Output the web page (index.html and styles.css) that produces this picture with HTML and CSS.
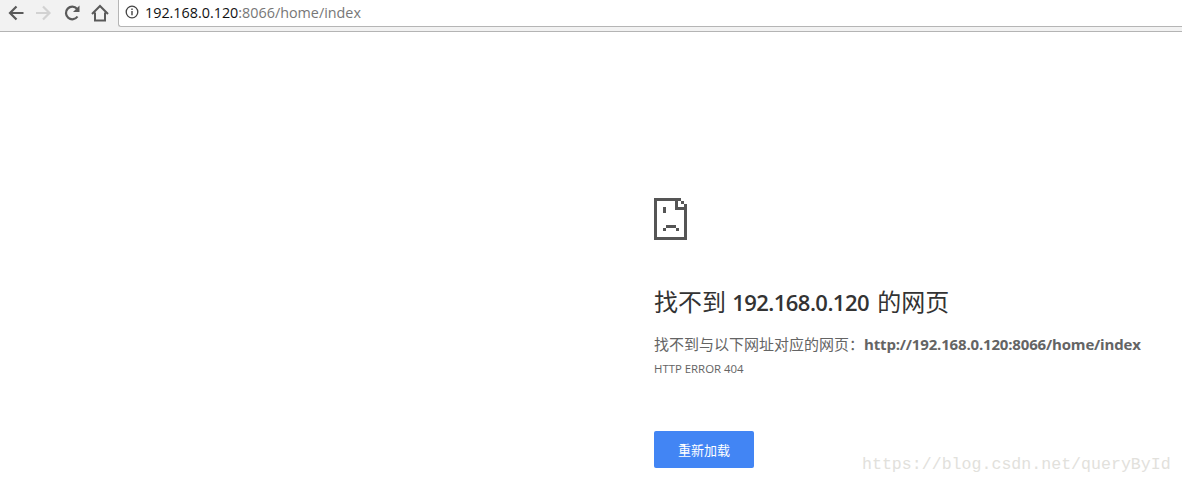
FILE: index.html
```html
<!DOCTYPE html>
<html lang="zh-CN">
<head>
    <meta charset="UTF-8">
    <title>192.168.0.120:8066/home/index</title>
    <link rel="stylesheet" href="styles.css">
</head>
<body>
    <!-- Browser toolbar -->
    <div class="toolbar">
        <svg class="nav-icon" width="22" height="26" viewBox="0 0 22 26"><path d="M18.500 13H6M11.500 6.500 5 13l6.500 6.500" fill="none" stroke="#5a5a5a" stroke-width="2.200"/></svg>
        <svg class="nav-icon" width="22" height="26" viewBox="0 0 22 26"><path d="M3 13h13M10 6.500l6.500 6.500-6.500 6.500" fill="none" stroke="#d2d2d2" stroke-width="2.200"/></svg>
        <svg class="nav-icon" width="22" height="26" viewBox="0 0 22 26"><path d="M16.500 16.500A6.300 6.300 0 1 1 16 8.800" fill="none" stroke="#5a5a5a" stroke-width="2.200"/><path d="M12 12h6.500V5.500z" fill="#5a5a5a"/></svg>
        <svg class="nav-icon" width="22" height="26" viewBox="0 0 22 26"><path d="M3 14 11 6l8 8M6 12.500v8h10v-8" fill="none" stroke="#5a5a5a" stroke-width="2"/></svg>
        <div class="address-bar">
            <svg class="info-icon" width="14" height="14" viewBox="0 0 14 14"><circle cx="7" cy="7" r="5.800" fill="none" stroke="#444" stroke-width="1.300"/><path d="M6.300 6h1.400v4.200H6.300zM6.300 3.600h1.400V5H6.300z" fill="#444"/></svg>
            <span class="host">192.168.0.120</span><span class="path">:8066/home/index</span>
        </div>
    </div>

    <!-- Error page -->
    <div class="error-page">
        <svg class="sad-page" width="33" height="42" viewBox="0 0 33 42" shape-rendering="crispEdges">
            <path d="M0 0h27v3h3v3h3v36H0zM3 3v36h27V12h-9V3z" fill="#555" fill-rule="evenodd"/>
            <path d="M24 3h3v3h3v3h-6z" fill="#fff"/>
            <path d="M9 9h3v6H9zM12 27h10v3H12zM9 30h3v3H9zM22 30h3v3h-3z" fill="#555"/>
        </svg>
        <h1>找不到 <span class="h1-host">192.168.0.120</span> 的网页</h1>
        <p class="message">找不到与以下网址对应的网页：<strong>http://192.168.0.120:8066/home/index</strong></p>
        <p class="error-code">HTTP ERROR 404</p>
        <button class="reload">重新加载</button>
    </div>

    <div class="watermark">https://blog.csdn.net/queryById</div>
</body>
</html>
```

FILE: styles.css
```css
html, body {
    margin: 0;
    padding: 0;
    height: 484px;
    overflow: hidden;
    background: #ffffff;
    font-family: "Open Sans", "Noto Sans CJK SC", sans-serif;
}

/* Toolbar */
.toolbar {
    display: flex;
    align-items: flex-start;
    height: 31px;
    padding-left: 5px;
    gap: 6px;
    background: #f2f2f2;
    border-bottom: 1px solid #b4b4b4;
}

.nav-icon {
    flex: none;
}

.address-bar {
    display: flex;
    align-items: center;
    flex: 1;
    height: 24px;
    margin-left: 1px;
    padding: 0 0 2px 6px;
    background: #ffffff;
    border-left: 1px solid #b5b5b5;
    border-bottom: 1px solid #b5b5b5;
    border-bottom-left-radius: 3px;
    font-size: 14.350px;
}

.info-icon {
    margin-right: 6px;
}

.host {
    color: #111111;
}

.path {
    color: #777777;
}

/* Error content */
.error-page {
    padding: 166px 0 0 654px;
}

.sad-page {
    display: block;
}

h1 {
    margin: 47px 0 0;
    font-size: 24px;
    line-height: 30px;
    font-weight: 400;
    color: #333333;
}

.h1-host {
    margin-right: 2px;
    font-size: 22px;
    font-weight: 600;
    letter-spacing: -0.550px;
}

.message {
    margin: 17px 0 0;
    font-size: 15px;
    line-height: 20px;
    color: #646464;
    white-space: nowrap;
}

.message strong {
    letter-spacing: -0.170px;
}

.error-code {
    margin: 7px 0 0;
    font-size: 11.400px;
    line-height: 16px;
    color: #646464;
}

.reload {
    display: block;
    width: 100px;
    height: 37px;
    margin-top: 54px;
    padding: 0;
    border: none;
    border-radius: 2px;
    background: #4285f4;
    color: #ffffff;
    font-family: "Noto Sans CJK SC", sans-serif;
    font-size: 13px;
}

.watermark {
    position: absolute;
    top: 455px;
    left: 862px;
    font-family: "Liberation Mono", monospace;
    font-size: 16.600px;
    line-height: 20px;
    color: #e2e1dc;
}
```
